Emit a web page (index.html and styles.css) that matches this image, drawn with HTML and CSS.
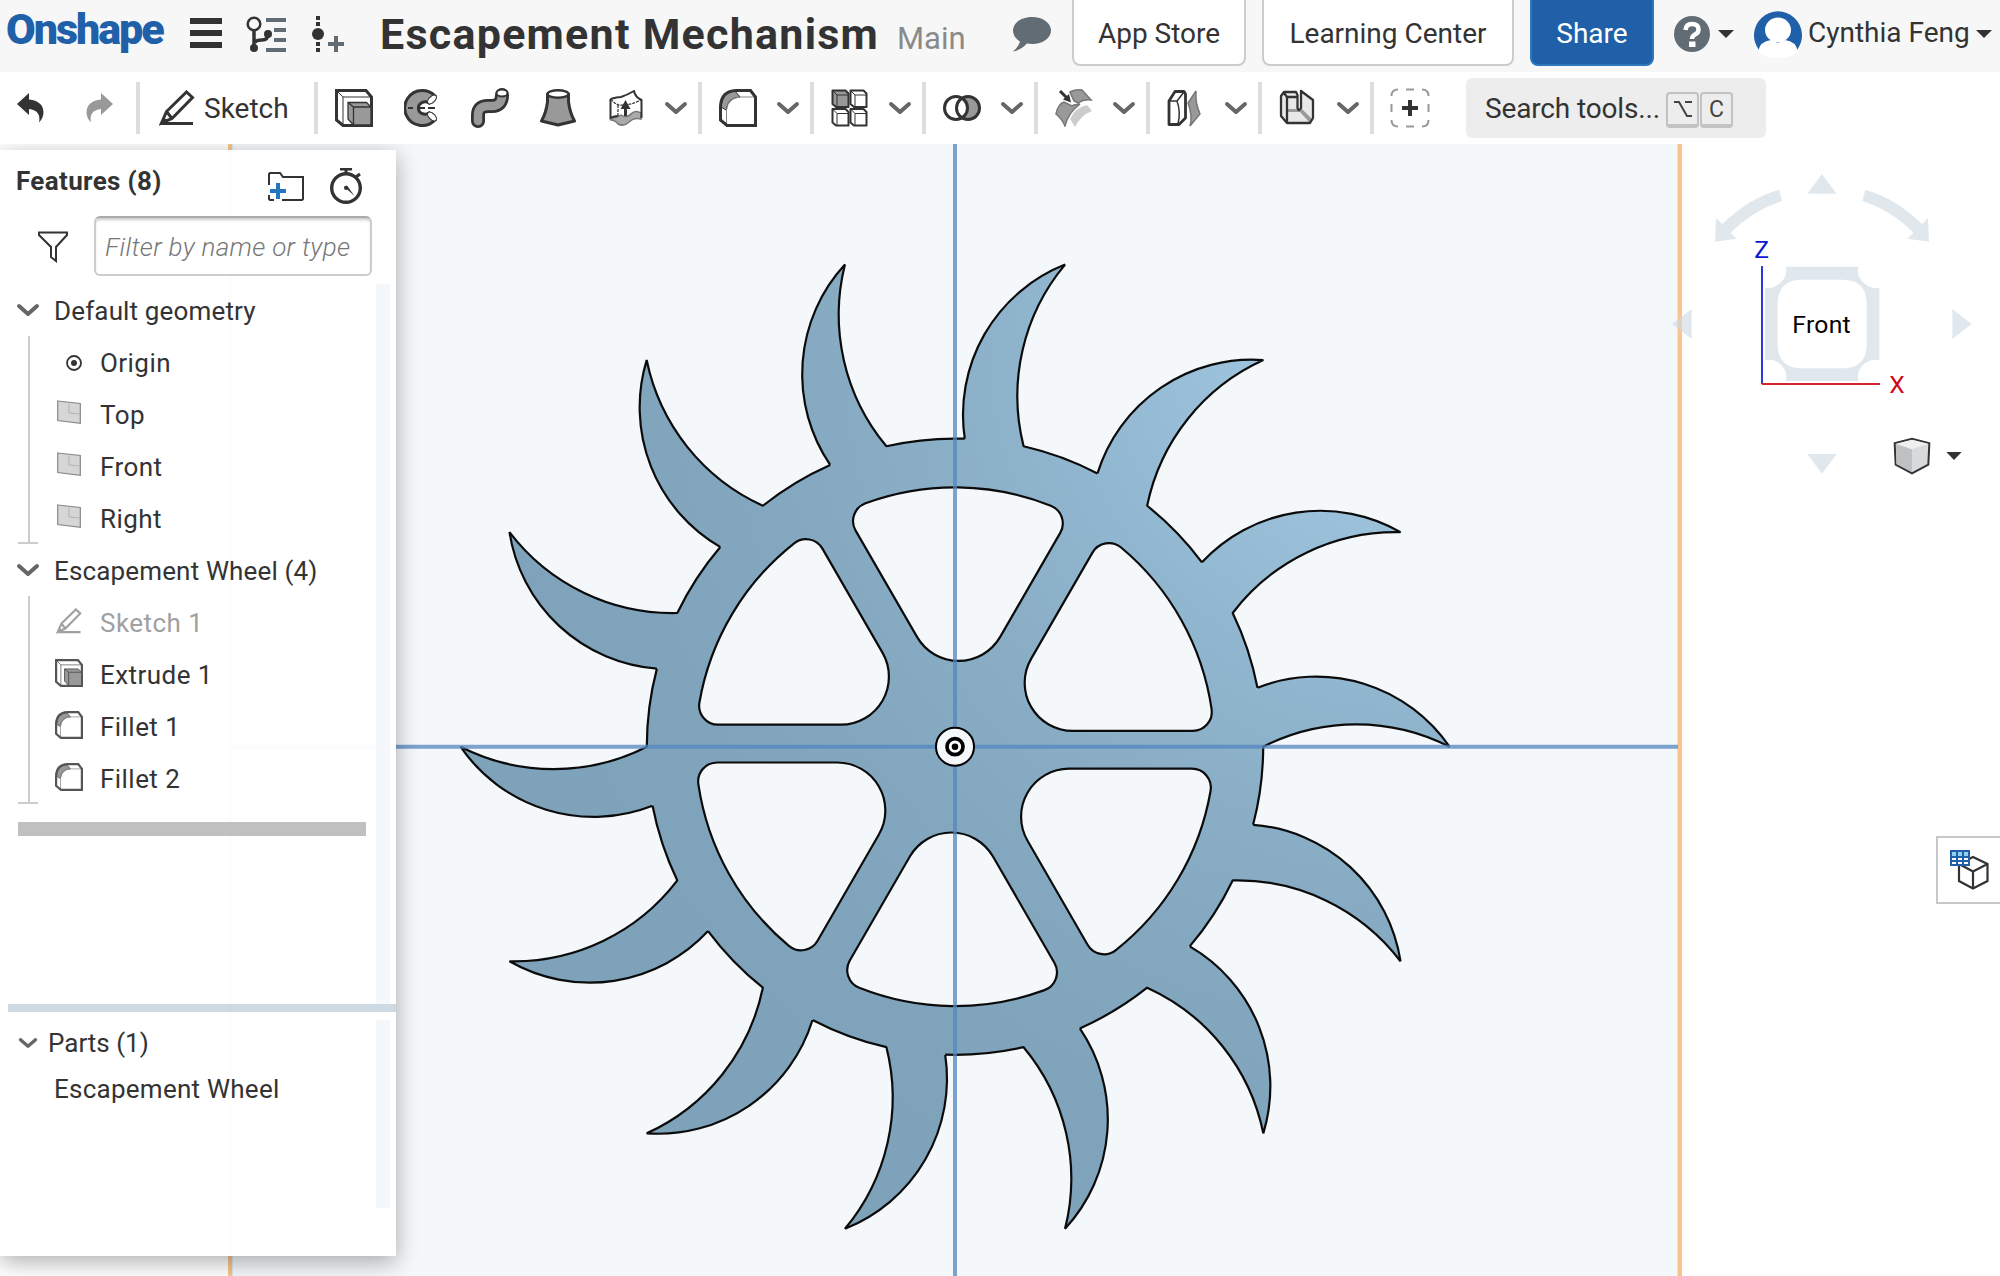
FILE: index.html
```html
<!DOCTYPE html>
<html lang="en">
<head>
<meta charset="utf-8">
<title>Escapement Mechanism</title>
<link rel="stylesheet" href="styles.css">
</head>
<body>
<svg class="defs" width="0" height="0">
  <defs>
    <symbol id="chev" viewBox="0 0 24 14"><path d="M3 3l9 8 9-8" fill="none" stroke="#666" stroke-width="4" stroke-linecap="round" stroke-linejoin="round"/></symbol>
    <symbol id="caret" viewBox="0 0 16 8"><path d="M0 0h16l-8 8z" fill="#333"/></symbol>
    <symbol id="pencil" viewBox="0 0 36 36"><path d="M1.500 33.500H34M2.500 33L7.500 21.500 27.500 2 33.500 7.500 13 28.500zM7.500 21.500L13 28.500" fill="none" stroke="currentColor" stroke-width="3"/><path d="M2 33l2.500-6 4 3.500z" fill="currentColor"/></symbol>
    <symbol id="extrude" viewBox="0 0 38 38"><path d="M1.500 1.500H31L36.500 8V36.500H8L1.500 31z" fill="#fff" stroke="currentColor" stroke-width="3"/><path d="M2 2l6 6H36M8 8V36" fill="none" stroke="currentColor" stroke-width="1"/><path d="M13 13.500H31.500L36 18V36H18.500L13 30z" fill="#999" stroke="currentColor" stroke-width="1.300"/><path d="M13 13.500l5.500 4.500H36M18.500 18V36" fill="none" stroke="currentColor" stroke-width="1.300"/></symbol>
    <symbol id="fillet" viewBox="0 0 38 38"><path d="M1.500 17Q2.500 2 17 1.500H31.500L36.500 8V36.500H8L1.500 31z" fill="#fff"/><path d="M2 18Q3 3 16 2L21 8Q9 8 7 21z" fill="#999" stroke="currentColor" stroke-width="1"/><path d="M7.500 36V21Q9 9 21 8H36" fill="none" stroke="#888" stroke-width="1"/><path d="M1.500 17Q2.500 2 17 1.500H31.500L36.500 8V36.500H8L1.500 31z" fill="none" stroke="currentColor" stroke-width="3"/></symbol>
    <symbol id="plane" viewBox="0 0 24 24"><path d="M.7 1L23.300 3.500V23.300L.7 20.500z" fill="#d6d6d6" stroke="#888" stroke-width="1.200"/><path d="M12 2.500V13L23 14" fill="none" stroke="#b4b4b4" stroke-width="1"/></symbol>
    <path id="tooth" d="M302.500-59A161.500 161.500 0 0 1 494.500 0A205 205 0 0 0 308.200 0A308.200 308.200 0 0 1 298.100 78.100"/>
    <path id="window" d="M117.700-15.800H237.800A19 19 0 0 0 256.600-37.600A259.300 259.300 0 0 0 166.100-199.200A19 19 0 0 0 137.450-194.100L76.100-87.800A48 48 0 0 0 117.700-15.800Z"/>
    <g id="teeth">
      <use href="#tooth"/><use href="#tooth" transform="rotate(25.714)"/><use href="#tooth" transform="rotate(51.429)"/><use href="#tooth" transform="rotate(77.143)"/><use href="#tooth" transform="rotate(102.857)"/><use href="#tooth" transform="rotate(128.571)"/><use href="#tooth" transform="rotate(154.286)"/><use href="#tooth" transform="rotate(180)"/><use href="#tooth" transform="rotate(205.714)"/><use href="#tooth" transform="rotate(231.429)"/><use href="#tooth" transform="rotate(257.143)"/><use href="#tooth" transform="rotate(282.857)"/><use href="#tooth" transform="rotate(308.571)"/><use href="#tooth" transform="rotate(334.286)"/>
    </g>
    <mask id="wheel" maskUnits="userSpaceOnUse" x="-510" y="-510" width="1020" height="1020"><g fill="#fff"><circle r="308"/><use href="#teeth"/></g></mask>
    <radialGradient id="steel" gradientUnits="userSpaceOnUse" cx="460" cy="-410" r="1000">
      <stop offset="0" stop-color="#a6cce5"/><stop offset=".2" stop-color="#9bc1da"/><stop offset=".35" stop-color="#91b6cf"/><stop offset=".5" stop-color="#89aec6"/><stop offset=".65" stop-color="#83a8c0"/><stop offset=".8" stop-color="#7fa4bc"/><stop offset="1" stop-color="#7da2ba"/>
    </radialGradient>
  </defs>
</svg>

<header class="topbar">
  <span class="logo">Onshape</span>
  <svg class="i-menu" width="32" height="30"><path d="M0 3h32M0 15h32M0 27h32" stroke="#333" stroke-width="6"/></svg>
  <svg class="i-tree" width="42" height="38" viewBox="0 0 42 38"><g fill="none" stroke="#333" stroke-width="3.500"><circle cx="8" cy="8" r="6.300" stroke-width="2.500"/><path d="M8 14V32M9 26Q11 24 16 24Q22 24 22 18"/></g><circle cx="8" cy="32" r="4" fill="#333"/><circle cx="22" cy="18" r="4" fill="#333"/><path d="M20 4H40M28 14H40M28 24H40M20 34H40" stroke="#616c75" stroke-width="4"/></svg>
  <svg class="i-ver" width="34" height="38" viewBox="0 0 34 38"><path d="M6 0v4M6 6v4M6 26v4M6 32v4" stroke="#333" stroke-width="4"/><circle cx="6" cy="18" r="6" fill="#333"/><path d="M16 28H32M24 20V36" stroke="#616c75" stroke-width="4"/></svg>
  <h1 class="title">Escapement Mechanism</h1>
  <span class="branch">Main</span>
  <svg class="i-chat" width="40" height="36" viewBox="0 0 40 36"><path d="M20 0C31 0 39 6 39 13.500S31 27 20 27L15 26.500Q9 33 1 34.500Q7 29 8 24.500Q1 20 1 13.500C1 6 9 0 20 0z" fill="#616c75"/></svg>
  <button class="btn store">App Store</button>
  <button class="btn learn">Learning Center</button>
  <button class="btn share">Share</button>
  <svg class="i-help" width="36" height="36" viewBox="0 0 36 36"><circle cx="18" cy="18" r="18" fill="#616c75"/><path d="M11.500 14Q12 8 18 8Q24.500 8 24.500 13.500Q24.500 17 21 18.500Q18 20 18 23" fill="none" stroke="#fff" stroke-width="4.500"/><path d="M15 25.500h6.500v5.500h-6.500z" fill="#fff"/></svg>
  <svg class="i-caret1" width="16" height="8"><use href="#caret"/></svg>
  <svg class="i-avatar" width="48" height="48" viewBox="0 0 48 48"><path d="M5 40A24 24 0 1 1 43 40z" fill="#1f60a9"/><ellipse cx="24" cy="20" rx="13" ry="12.500" fill="#fff"/><path d="M4 42Q6 31 17 30L24 33 31 30Q42 31 44 42Q36 48 24 48T4 42z" fill="#fff"/></svg>
  <span class="user">Cynthia Feng</span>
  <svg class="i-caret2" width="16" height="8"><use href="#caret"/></svg>
</header>

<nav class="toolbar">
  <div class="hist">
    <svg width="28" height="30" viewBox="0 0 28 30"><path d="M0 11L12 0V6.500Q26 8 26.500 19Q26.500 25 22 29.500Q24.500 17.500 12 16V22z" fill="#333"/></svg>
    <svg width="28" height="30" viewBox="0 0 28 30"><path d="M27 11L15 0V6.500Q1 8 .5 19Q.5 25 5 29.500Q2.500 17.500 15 16V22z" fill="#999"/></svg>
  </div>
  <div class="sketch"><svg width="36" height="36"><use href="#pencil"/></svg><span>Sketch</span></div>
  <div class="solids">
    <svg width="38" height="38"><use href="#extrude"/></svg>
    <svg class="revolve" width="36" height="38" viewBox="0 0 36 38"><path d="M31 7Q26 1.500 18 1.500A17.500 17.500 0 1 0 31 31L25 24Q22 26 18 24.500A6 6 0 0 1 18 13.500Q22 12 25 14z" fill="#999" stroke="#333" stroke-width="3"/><ellipse cx="28" cy="10.500" rx="3" ry="5.500" transform="rotate(45 28 10.500)" fill="#fff" stroke="#333" stroke-width="1.200"/><ellipse cx="28" cy="27.500" rx="3" ry="5.500" transform="rotate(-45 28 27.500)" fill="#fff" stroke="#333" stroke-width="1.200"/><path d="M4 19h5M13 19h8M24 19h7" stroke="#333" stroke-width="1.800"/></svg>
    <svg class="sweep" width="38" height="40" viewBox="0 0 38 40"><path d="M7 33V27Q7 18 17 18H21Q31 18 31 7" fill="none" stroke="#333" stroke-width="14" stroke-linecap="round"/><path d="M7 33V27Q7 18 17 18H21Q31 18 31 7" fill="none" stroke="#999" stroke-width="8.500" stroke-linecap="round"/><ellipse cx="31" cy="5" rx="5.500" ry="3.500" fill="#fff" stroke="#333" stroke-width="2"/></svg>
    <svg class="loft" width="36" height="38" viewBox="0 0 36 38"><path d="M7.500 5V13Q6 24 1.500 32L18 36 34.500 32Q30 24 28.500 13V5z" fill="#999" stroke="#333" stroke-width="3" stroke-linejoin="round"/><ellipse cx="18" cy="5" rx="10.500" ry="3.700" fill="#fff" stroke="#333" stroke-width="2.500"/></svg>
    <svg class="thicken" width="34" height="36" viewBox="0 0 34 36"><path d="M2 28Q8 28 12 25Q18 29 23 23Q27 20 32 23V29Q25 27 20 32T9 34Q6 30 2 30z" fill="#aaa" stroke="#777" stroke-width="1.500"/><path d="M1.500 9Q8 7 12 7Q18 5 25 1Q26 7 32.500 10V28M1.500 9V28Q5 26 9 26" fill="none" stroke="#333" stroke-width="2"/><path d="M1.500 9Q6 14 10 15Q20 16 32 10M9 15V26" fill="none" stroke="#333" stroke-width="1.200" stroke-dasharray="3 1"/><path d="M15 26V19H11.500L16.500 10 21.500 19H18V26z" fill="#333"/></svg>
    <svg class="dd" width="24" height="14"><use href="#chev"/></svg>
  </div>
  <div class="group"><svg width="38" height="38"><use href="#fillet"/></svg><svg class="dd" width="24" height="14"><use href="#chev"/></svg></div>
  <div class="group"><svg width="38" height="38" viewBox="0 0 38 38"><g fill="#fff" stroke="#333" stroke-width="2" stroke-linejoin="round"><path d="M1.500 1.500H14.500L17.500 4.500V18H5L1.500 15z" fill="#999"/><path d="M19.500 1.500H32.500L35.500 4.500V18H23L19.500 15z"/><path d="M1.500 20H14.500L17.500 23V36.500H5L1.500 33.500z"/><path d="M19.500 20H32.500L35.500 23V36.500H23L19.500 33.500z"/></g><path d="M2 2l4 4H17M6 6V18M20 2l4 4H35M24 6V18M2 20.500l4 4H17M6 24.500V36M20 20.500l4 4H35M24 24.500V36" fill="none" stroke="#333"/></svg><svg class="dd" width="24" height="14"><use href="#chev"/></svg></div>
  <div class="group"><svg width="38" height="38" viewBox="0 0 38 38"><circle cx="25" cy="19" r="11.500" fill="#999"/><path d="M19 9Q25 13 25 19T19 29Q13.500 25 13.500 19T19 9z" fill="#fff"/><g fill="none" stroke="#333" stroke-width="3"><circle cx="13" cy="19" r="11.500"/><circle cx="25" cy="19" r="11.500"/></g></svg><svg class="dd" width="24" height="14"><use href="#chev"/></svg></div>
  <div class="group"><svg width="38" height="38" viewBox="0 0 38 38"><path d="M15 30Q21 18 32 16L37 22Q26 26 20 38z" fill="#ccc"/><path d="M1 25Q3 15 9 13L17 17 19 16 25 15Q13 24 10 37Q7 30 1 25zM15 3Q21 0 27 1L36 11Q29 10 23 14L19 12z" fill="#999" stroke="#777" stroke-width="1.500"/><path d="M5 2L12 9" stroke="#333" stroke-width="3"/><path d="M16 13.500L14 5 8 10.500z" fill="#333"/></svg><svg class="dd" width="24" height="14"><use href="#chev"/></svg></div>
  <div class="group"><svg width="38" height="38" viewBox="0 0 38 38"><path d="M2 12L8 2.500H17L18.500 5V29L12 35.500H2z" fill="#fff" stroke="#333" stroke-width="2.800" stroke-linejoin="round"/><path d="M2 12H10L17 3M10 12Q14 23 11 35" fill="none" stroke="#333" stroke-width="1.500"/><path d="M21 14L29 2Q28 14 33 25L23 37Q26 27 21 14z" fill="#999" stroke="#777" stroke-width="1.500"/></svg><svg class="dd" width="24" height="14"><use href="#chev"/></svg></div>
  <div class="group"><svg width="38" height="38" viewBox="0 0 38 38"><path d="M2 7L5 3H17L18 22H22V2L34 11V29L31 34H8L2 27z" fill="#e8e8e8"/><path d="M8 20H18Q20 24 23 20L34 31 31 34 21 23H8z" fill="#999"/><path d="M2 7L5 3H17L18.500 6V19Q20 23 22 19V2L34 11V29L31 34H8L2 27zM5 4L8 8H18M8 8V33" fill="none" stroke="#333" stroke-width="2.300" stroke-linejoin="round"/></svg><svg class="dd" width="24" height="14"><use href="#chev"/></svg></div>
  <div class="add"><svg width="40" height="40" viewBox="0 0 40 40"><path d="M1.500 8Q1.500 1.500 8 1.500M16 1.500H24M32 1.500Q38.500 1.500 38.500 8M38.500 16V24M38.500 32Q38.500 38.500 32 38.500M24 38.500H16M8 38.500Q1.500 38.500 1.500 32M1.500 24V16" fill="none" stroke="#999" stroke-width="2"/><path d="M12 20H28M20 12V28" stroke="#333" stroke-width="4"/></svg></div>
  <div class="search"><span>Search tools...</span><kbd><svg width="18" height="18" viewBox="0 0 18 18"><path d="M0 2H5L13 16H18M11 2H18" fill="none" stroke="#444" stroke-width="2"/></svg></kbd><kbd>C</kbd></div>
</nav>

<main class="canvas">
  <svg class="scene" width="2000" height="1132" viewBox="0 144 2000 1132">
    <rect x="230" y="144" width="1450" height="1132" fill="#f4f8fb"/>
    <path d="M232.500 144V1276M1677.500 144V1276" stroke="#dde6ee"/>
    <path d="M230 144V1276M1680 144V1276" stroke="#f9c489" stroke-width="4"/>
    <g transform="translate(955 746.700)">
      <rect x="-505" y="-505" width="1010" height="1010" fill="url(#steel)" mask="url(#wheel)"/>
      <g fill="none" stroke="#0b0b0b" stroke-width="2.200" stroke-linejoin="bevel"><use href="#teeth"/></g>
      <g fill="#f4f8fb" stroke="#0b0b0b" stroke-width="2.200"><use href="#window"/><use href="#window" transform="rotate(60)"/><use href="#window" transform="rotate(120)"/><use href="#window" transform="rotate(180)"/><use href="#window" transform="rotate(240)"/><use href="#window" transform="rotate(300)"/></g>
      <path d="M0-603V530M-723 0H723" stroke="#5387c0" stroke-width="4" opacity=".75"/>
      <circle r="19" fill="#f4f8fb" stroke="#000" stroke-width="2"/><circle r="8" fill="#fff" stroke="#000" stroke-width="3.700"/><circle r="3.300"/>
    </g>
  </svg>

  <aside class="panel">
    <div class="phead"><b>Features (8)</b>
      <svg class="i-folder" width="36" height="30" viewBox="0 0 36 30"><path d="M1 13V2L2 1H12L15 5H35V27L34 28H14M1 23V27L2 28H6" fill="none" stroke="#333" stroke-width="2"/><path d="M2 19H18M10 11V27" stroke="#2277bd" stroke-width="4"/></svg>
      <svg class="i-watch" width="32" height="36" viewBox="0 0 32 36"><circle cx="16" cy="20" r="14.300" fill="none" stroke="#333" stroke-width="3.400"/><path d="M10 1H22M16 1V6M26 9L30 6" stroke="#333" stroke-width="3"/><path d="M14 18.500L17 17.500 24.500 28z" fill="#333"/><circle cx="16" cy="20" r="2" fill="#333"/></svg>
    </div>
    <div class="filter"><svg width="30" height="32" viewBox="0 0 30 32"><path d="M1 1.500H29L29 4 18 16V30L13 26V16L1 4z" fill="none" stroke="#333" stroke-width="2"/></svg><input type="text" placeholder="Filter by name or type"></div>
    <div class="features">
      <div class="list">
        <div class="head"><svg width="24" height="14"><use href="#chev"/></svg><span>Default geometry</span></div>
        <div class="kids">
          <div class="row"><i><svg class="org" width="16" height="16" viewBox="0 0 16 16"><circle cx="8" cy="8" r="7" fill="none" stroke="#333" stroke-width="1.800"/><circle cx="8" cy="8" r="3" fill="#333"/></svg></i>Origin</div>
          <div class="row"><i><svg width="24" height="24"><use href="#plane"/></svg></i>Top</div>
          <div class="row"><i><svg width="24" height="24"><use href="#plane"/></svg></i>Front</div>
          <div class="row"><i><svg width="24" height="24"><use href="#plane"/></svg></i>Right</div>
        </div>
        <div class="head"><svg width="24" height="14"><use href="#chev"/></svg><span>Escapement Wheel (4)</span></div>
        <div class="kids feat">
          <div class="row off"><i><svg width="26" height="26"><use href="#pencil"/></svg></i>Sketch 1</div>
          <div class="row"><i><svg width="28" height="28"><use href="#extrude"/></svg></i>Extrude 1</div>
          <div class="row"><i><svg width="28" height="28"><use href="#fillet"/></svg></i>Fillet 1</div>
          <div class="row"><i><svg width="28" height="28"><use href="#fillet"/></svg></i>Fillet 2</div>
        </div>
        <div class="rollback"></div>
      </div>
      <div class="strip"></div>
    </div>
    <div class="divider"></div>
    <div class="parts">
      <div class="list">
        <div class="phd"><svg width="20" height="12"><use href="#chev"/></svg><span>Parts (1)</span></div>
        <div class="part">Escapement Wheel</div>
      </div>
      <div class="strip"></div>
    </div>
  </aside>

  <svg class="cube" width="360" height="350" viewBox="0 0 1080 1050">
    <g fill="#cddae4" opacity=".6">
      <path d="M546 72L590 131H502zM546 971L590 912H502zM96 522L155 477V567zM995 522L937 477V567z"/>
      <path d="M417 119L426 153Q340 180 272 248L290 266L225 275L228 204L247 222Q325 145 417 119z"/>
      <path d="M676 119L667 153Q752 180 820 248L802 266L867 275L864 204L846 222Q768 145 676 119z"/>
      <path fill-rule="evenodd" d="M437 350H656Q648 375 668 395Q690 418 718 413V631Q690 624 668 646Q648 668 656 693H437Q444 668 424 646Q402 624 375 631V413Q402 418 424 395Q444 375 437 350zM486 389Q413 389 413 462V582Q413 655 486 655H607Q680 655 680 582V462Q680 389 607 389z"/>
    </g>
    <path d="M366 348V702" stroke="#2b3bd8" stroke-width="6"/><path d="M366 702H720" stroke="#d8232f" stroke-width="6"/>
    <text x="343" y="323" class="ax" fill="#0a18d0">Z</text><text x="748" y="728" class="ax" fill="#d00a18">X</text>
    <text x="457" y="549" class="face" textLength="175">Front</text>
    <path d="M764 880L816 866 868 880 865 944 816 970 767 944z" fill="#d9dadc" stroke="#333" stroke-width="6"/><path d="M768 882L816 898V966L769 942z" fill="#bfc0c2"/><path d="M768 881L816 869 865 881 816 898z" fill="#efefef"/>
    <path d="M919 906H965L942 930z" fill="#333"/>
  </svg>

  <div class="tab"><svg width="40" height="42" viewBox="0 0 40 42"><path d="M10 15L24 8 38.500 15V32L24 39.500 10 32zM10 15L24 22.500 38.500 15M24 22.500V39.500" fill="none" stroke="#333" stroke-width="2.200"/><rect x="1" y="1" width="20" height="16" fill="#1f60a9"/><path d="M3 3h4v4h-4zM9 3h4v4h-4zM15 3h4v4h-4z" fill="#8fd0f5"/><path d="M3 9h4v2h-4zM9 9h4v2h-4zM15 9h4v2h-4zM3 13h4v2h-4zM9 13h4v2h-4zM15 13h4v2h-4z" fill="#fff"/></svg></div>
</main>
</body>
</html>
```

FILE: styles.css
```css
* { box-sizing: border-box; }
body { margin: 0; width: 2000px; height: 1276px; overflow: hidden; background: #fff; font-family: Roboto, "Liberation Sans", sans-serif; font-size: 26px; color: #333; }
svg { display: block; flex: none; }
.defs { position: absolute; }

.topbar { height: 72px; background: #f7f7f7; display: flex; align-items: flex-start; white-space: nowrap; overflow: hidden; }
.logo { width: 182px; padding-left: 6px; font-size: 43px; font-weight: 900; color: #1f60a9; line-height: 58px; letter-spacing: -2px; }
.i-menu { margin: 18px 0 0 8px; }
.i-tree { margin: 16px 0 0 24px; }
.i-ver { margin: 16px 0 0 24px; }
.title { margin: 0 0 0 34px; width: 519px; font-size: 43px; line-height: 69px; font-weight: 700; letter-spacing: 1.250px; }
.branch { width: 113px; margin-left: -2px; margin-right: 2px; font-size: 31px; line-height: 78px; color: #8a8a8a; }
.i-chat { margin: 17px 20px 0 0; }
.btn { height: 76px; margin: -10px 17px 0 0; padding: 11px 0 0; border: 2px solid #ccc; border-radius: 8px; background: #fff; font: 28px Roboto, sans-serif; color: #333; flex: none; }
.store { width: 174px; margin-right: 16px; }
.learn { width: 252px; margin-right: 16px; }
.share { width: 124px; background: #1f60a9; border-color: #2b78bd; color: #fff; margin-right: 20px; }
.i-help { margin-top: 16px; }
.i-caret1 { margin: 30px 0 0 8px; }
.i-avatar { margin: 10px 7px 0 20px; }
.user { font-size: 28px; line-height: 65px; width: 167px; margin-left: -1px; margin-right: 1px; }
.i-caret2 { margin-top: 30px; }

.toolbar { height: 72px; display: flex; padding-top: 10px; background: #fff; white-space: nowrap; }
.toolbar > div { height: 52px; display: flex; align-items: center; flex: none; }
.hist { width: 136px; padding-left: 17px; gap: 41px; }
.toolbar .sketch, .toolbar .solids, .toolbar .group, .toolbar .add { border-left: 4px solid #ddd; }
.sketch { width: 178px; padding-left: 19px; gap: 9px; font-size: 28px; }
.solids { width: 384px; padding-left: 17px; }
.revolve { margin-left: 31px; }
.sweep { margin-left: 31px; }
.loft { margin-left: 31px; }
.thicken { margin-left: 33px; }
.solids .dd { margin-left: 21px; }
.group { width: 112px; padding-left: 17px; gap: 19px; }
.add { width: 96px; padding-left: 16px; }
.toolbar .search { width: 300px; height: 60px; margin-top: -4px; padding-left: 19px; background: #ededed; border-radius: 6px; font-size: 28px; letter-spacing: -.150px; }
.search span { width: 181px; }
kbd { width: 33px; height: 36px; margin: 4px 1px 0 0; border: 2px solid #c2c2c2; border-bottom-width: 4px; border-radius: 4px; font: 23px/31px Roboto, sans-serif; color: #444; display: flex; align-items: center; justify-content: center; }

.canvas { position: relative; height: 1132px; overflow: hidden; }
.panel { position: absolute; left: 0; top: 6px; width: 396px; height: 1106px; background: rgba(255,255,255,.96); box-shadow: 0 6px 22px rgba(0,0,0,.32); letter-spacing: .450px; white-space: nowrap; }
.phead { height: 66px; display: flex; padding-left: 16px; line-height: 62px; }
.phead b { width: 252px; font-weight: 700; letter-spacing: .350px; }
.i-folder { margin-top: 22px; }
.i-watch { margin: 18px 0 0 26px; }
.filter { height: 68px; display: flex; padding-left: 38px; }
.filter svg { margin-top: 15px; }
.filter input { width: 278px; height: 60px; margin-left: 26px; padding: 2px 9px 0; border: 2px solid #ccc; border-top-color: #aaa; border-radius: 6px; background: #fff; box-shadow: inset 0 3px 3px -1px #ccc; font: italic 300 26px Roboto, sans-serif; letter-spacing: .300px; }
.filter input::placeholder { color: #777; opacity: 1; }
.features { height: 720px; display: flex; }
.list { width: 376px; padding-top: 1px; }
.strip { width: 14px; background: #f4f8fb; }
.head { height: 52px; display: flex; align-items: center; padding-left: 16px; gap: 14px; letter-spacing: .150px; }
.head svg { margin-top: -2px; }
.kids { height: 208px; position: relative; margin-left: 28px; }
.kids::before { content: ""; position: absolute; left: 0; top: -1px; height: 207px; border-left: 2px solid #ccc; }
.kids::after { content: ""; position: absolute; left: -10px; top: 205px; width: 20px; height: 2px; background: #ccc; }
.row { height: 52px; display: flex; align-items: center; padding-left: 26px; }
.row i { width: 46px; height: 30px; display: flex; align-items: center; padding-left: 3px; }
.kids:not(.feat) .row i { margin-top: -6px; }
.kids .row .org { margin: 5px 0 0 9px; }
.feat .row i { padding-left: 1px; color: #555; margin-top: -4px; }
.row.off, .feat .row.off i { color: #a0a0a0; }
.feat .row.off i { padding-left: 2px; }
.rollback { margin: 17px 0 0 18px; width: 348px; height: 14px; background: #c0c0c0; }
.divider { height: 8px; margin: 0 0 8px 8px; background: #cddae3; }
.parts { height: 188px; display: flex; letter-spacing: .250px; }
.phd { display: flex; align-items: center; gap: 10px; padding: 0 0 0 18px; height: 44px; letter-spacing: 0; }
.part { padding-left: 54px; line-height: 48px; }
.cube { position: absolute; left: 1640px; top: 6px; }
.ax { font: 400 74px Roboto, sans-serif; stroke: currentColor; stroke-width: 0; }
.face { font: 400 74px Roboto, sans-serif; fill: #000; }
.tab { position: absolute; right: 0; top: 692px; width: 64px; height: 68px; border: 2px solid #c8c8c8; border-right: 0; background: #fff; padding: 11px 0 0 11px; }
```
